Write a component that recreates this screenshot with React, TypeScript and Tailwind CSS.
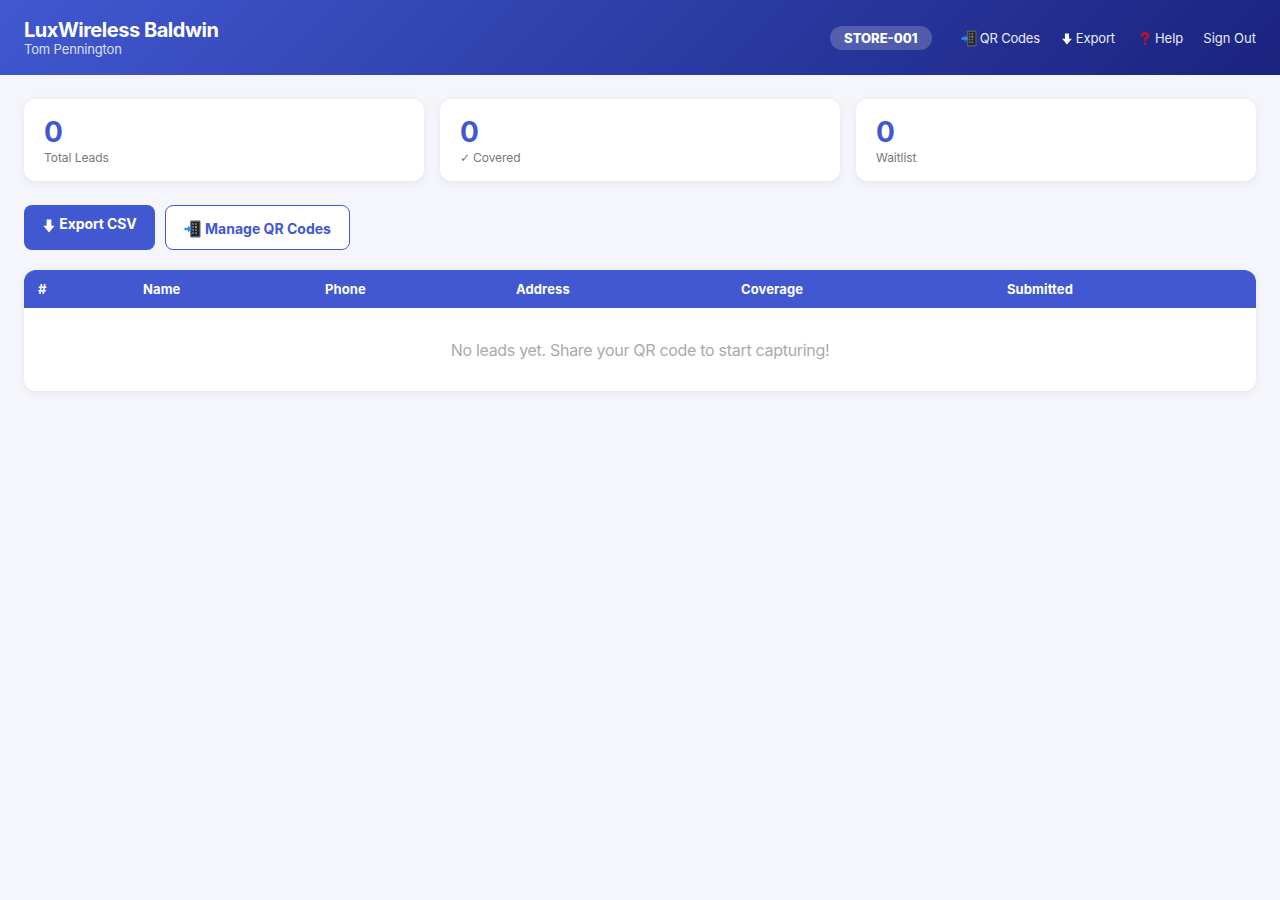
const Phone = ({ s = 18 }: { s?: number }) => (
  <svg width={s} height={s} viewBox="0 0 18 18" className="inline-block shrink-0">
    <rect x="6.2" y="0.5" width="10.3" height="17" rx="1.2" fill="#5a5e66" />
    <rect x="7.4" y="2" width="7.9" height="14" fill="#20242c" />
    <rect x="8" y="3" width="2" height="2" fill="#b5473c" />
    <rect x="11" y="3" width="2" height="2" fill="#3a7f5a" />
    <rect x="8" y="6" width="2" height="2" fill="#3f6fb5" />
    <rect x="11" y="6" width="2" height="2" fill="#c08a3a" />
    <rect x="8" y="9" width="2" height="2" fill="#8a4fa0" />
    <rect x="11" y="9" width="2" height="2" fill="#b5473c" />
    <rect x="8" y="12" width="2" height="2" fill="#3a7f5a" />
    <rect x="11" y="12" width="2" height="2" fill="#3f6fb5" />
    <path d="M0.5 7.8h3.5V5.6L7.6 9 4 12.4v-2.2H0.5z" fill="#2f8fe8" />
  </svg>
);
const Down = ({ color = "#fff", s = 14 }: { color?: string; s?: number }) => (
  <svg width={s} height={s} viewBox="0 0 14 14" className="inline-block shrink-0">
    <path d="M4.6 0.5h4.8v6.300h3.300L7 13.500 1.300 6.800h3.300z" fill={color} />
  </svg>
);
const Question = () => (
  <svg width="14" height="15" viewBox="0 0 14 15" className="inline-block shrink-0">
    <path d="M3 5c0-2.400 1.800-3.800 4-3.800s4 1.300 4 3.400c0 2.600-3 2.900-3 5.200H6c0-3 2.900-3.400 2.900-5.100 0-1-.8-1.600-1.900-1.600-1.200 0-1.900.8-1.900 1.900z" fill="#c8102e" stroke="#c8102e" strokeWidth="0.6" />
    <circle cx="7" cy="12.700" r="1.400" fill="#c8102e" />
  </svg>
);
const Stat = ({ label, check }: { label: string; check?: boolean }) => (
  <div className="bg-white rounded-xl px-5 pt-4 pb-4 shadow-[0_2px_8px_rgba(0,0,0,0.07)] h-[82px]">
    <div className="text-[28px] leading-[34px] font-bold text-[#4158d0]">0</div>
    <div className="text-xs leading-[15px] mt-[1px] tracking-[-0.05px] text-[#777777]">
      {check && <span className="font-['DejaVu_Sans',sans-serif] mr-[3px]">✓</span>}
      {label}
    </div>
  </div>
);
export default function App() {
  return (
    <div className="min-h-[900px] bg-[#f4f6fb] font-['Inter',sans-serif]">
      <header className="h-[75px] px-6 flex items-center justify-between text-white bg-[linear-gradient(135deg,#4158d0,#1a237e)]">
        <div className="pb-[1px]">
          <div className="text-xl leading-6 font-bold tracking-[-0.47px]">LuxWireless Baldwin</div>
          <div className="text-[13px] leading-[15px] tracking-[-0.15px] text-white/80">Tom Pennington</div>
        </div>
        <div className="flex items-center text-[13px] text-white/90 pt-[2px]">
          <span className="bg-white/20 rounded-full w-[102px] h-6 mb-[2px] pt-[2px] flex items-center justify-center text-[13px] font-extrabold text-white mr-[29px]">STORE-001</span>
          <span className="flex items-center gap-[2px] mr-[21px] tracking-[-0.2px]"><Phone s={17} />QR Codes</span>
          <span className="flex items-center gap-[3px] mr-[23px] tracking-[-0.15px]"><Down s={12} />Export</span>
          <span className="flex items-center gap-[3px] mr-5"><Question />Help</span>
          <span>Sign Out</span>
        </div>
      </header>
      <main className="p-6">
        <div className="grid grid-cols-3 gap-4 mb-6">
          <Stat label="Total Leads" />
          <Stat label="Covered" check />
          <Stat label="Waitlist" />
        </div>
        <div className="flex gap-[10px] mb-5 items-stretch">
          <div className="w-[131px] h-[45px] bg-[#4158d0] rounded-lg text-white text-sm font-bold tracking-[-0.1px] flex items-start justify-center gap-[3px] pt-[10px] leading-[18px]"><span className="mt-[1px]"><Down s={14} /></span>Export CSV</div>
          <div className="w-[185px] h-[45px] bg-white border border-[#4158d0] rounded-lg text-[#4158d0] text-sm font-bold flex items-center justify-center gap-[3px] pt-[2px]"><Phone s={18} />Manage QR Codes</div>
        </div>
        <div className="bg-white rounded-xl overflow-hidden shadow-[0_2px_8px_rgba(0,0,0,0.07)]">
          <table className="w-full table-fixed border-collapse">
            <thead>
              <tr className="bg-[#4158d0] text-white text-left text-[13px] tracking-[0.1px] h-[38px]">
                <th className="pl-[14px] pt-[2px] w-[105px] font-bold">#</th>
                <th className="pl-[14px] pt-[2px] w-[182px] font-bold">Name</th>
                <th className="pl-[14px] pt-[2px] w-[191px] font-bold">Phone</th>
                <th className="pl-[14px] pt-[2px] w-[225px] font-bold">Address</th>
                <th className="pl-[14px] pt-[2px] w-[266px] font-bold">Coverage</th>
                <th className="pl-[14px] pt-[2px] font-bold">Submitted</th>
              </tr>
            </thead>
            <tbody>
              <tr>
                <td colSpan={6} className="h-[83px] text-center text-base tracking-[-0.3px] text-[#aaaaaa]">No leads yet. Share your QR code to start capturing!</td>
              </tr>
            </tbody>
          </table>
        </div>
      </main>
    </div>
  );
}
